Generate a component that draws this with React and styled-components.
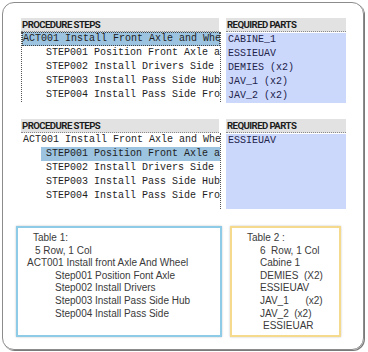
import React from "react";
import styled, { createGlobalStyle } from "styled-components";

const GlobalStyle = createGlobalStyle`
  body {
    margin: 0;
    background: #fff;
    font-family: "Liberation Sans", Arial, sans-serif;
  }
`;

const Frame = styled.div`
  box-sizing: border-box;
  margin: 2px;
  width: 362px;
  height: 348px;
  border: 1px solid #8c8c8c;
  border-radius: 12px;
  box-shadow: 1px 1px 0 #7a7a7a;
  padding: 15px 0 0 13px;
`;

const Group = styled.div`
  display: flex;
  gap: 5px;
  margin-left: 5px;
  margin-bottom: ${(p) => p.$after}px;
`;

const StepsPanel = styled.div`
  width: 200px;
`;

const PartsPanel = styled.div`
  width: 120px;
  display: flex;
  flex-direction: column;
`;

const Header = styled.div`
  box-sizing: border-box;
  height: 14px;
  line-height: 13px;
  padding-left: 1px;
  background: #e2e2e2;
  border-bottom: 1px dotted #8a8a8a;
  font-family: Roboto, "Liberation Sans", sans-serif;
  font-weight: 700;
  font-size: 9.6px;
  letter-spacing: -0.55px;
  color: #1c1c1c;
  margin-right: ${(p) => (p.$trim ? 2 : 0)}px;
`;

const StepsBody = styled.div`
  box-sizing: border-box;
  min-height: ${(p) => p.$height}px;
  border-right: 1px dotted #555;
  border-left: 1px dotted ${(p) => (p.$focused ? "#555" : "transparent")};
`;

const Row = styled.div`
  display: flex;
  height: 14px;
  padding-left: ${(p) => p.$indent}px;
  overflow: hidden;
`;

const Label = styled.span`
  box-sizing: border-box;
  flex: 1;
  height: 14px;
  line-height: 14px;
  padding-left: ${(p) => p.$pad}px;
  white-space: pre;
  overflow: hidden;
  font-family: "Liberation Mono", "Courier New", monospace;
  font-size: 10px;
  color: #1e1e1e;
  background: ${(p) => (p.$selected ? "#9cc3df" : "transparent")};
  outline: ${(p) => (p.$focused ? "1px dotted #444" : "none")};
  outline-offset: -1px;
`;

const PartsBody = styled.div`
  flex: 1;
  margin-top: 1px;
  background: #ccd7fc;
`;

const Part = styled.div`
  height: 14px;
  line-height: 14px;
  padding-left: 2px;
  white-space: pre;
  font-family: "Liberation Mono", "Courier New", monospace;
  font-size: 10px;
  color: #22244a;
`;

const Notes = styled.div`
  display: flex;
  gap: 8px;
`;

const NoteBox = styled.div`
  box-sizing: border-box;
  width: ${(p) => p.$width}px;
  height: 111px;
  border: 2px solid ${(p) => p.$color};
  box-shadow: 0 0 2px rgba(0, 0, 0, 0.22);
  padding-top: 4px;
`;

const Line = styled.div`
  padding-left: ${(p) => p.$indent}px;
  font-size: 10px;
  line-height: 12.6px;
  color: #3a3a3a;
  white-space: pre;
`;

const steps = [
  { text: "ACT001 Install Front Axle and Wheel", level: 0 },
  { text: "STEP001 Position Front Axle and Wheel", level: 1 },
  { text: "STEP002 Install Drivers Side Hub", level: 1 },
  { text: "STEP003 Install Pass Side Hub", level: 1 },
  { text: "STEP004 Install Pass Side Front", level: 1 },
];

function StepList({ selected, focused, height }) {
  return (
    <StepsBody $height={height} $focused={focused}>
      {steps.map((s, i) => (
        <Row key={i} $indent={s.level ? 19 : 0}>
          <Label
            $pad={s.level ? 5 : 1}
            $selected={i === selected}
            $focused={focused && i === selected}
          >
            {s.text}
          </Label>
        </Row>
      ))}
    </StepsBody>
  );
}

function Procedure({ selected, focused, parts, height, after }) {
  return (
    <Group $after={after}>
      <StepsPanel>
        <Header $trim>PROCEDURE STEPS</Header>
        <StepList selected={selected} focused={focused} height={height} />
      </StepsPanel>
      <PartsPanel>
        <Header>REQUIRED PARTS</Header>
        <PartsBody>
          {parts.map((p) => (
            <Part key={p}>{p}</Part>
          ))}
        </PartsBody>
      </PartsPanel>
    </Group>
  );
}

export default function App() {
  return (
    <>
      <GlobalStyle />
      <Frame>
        <Procedure
          selected={0}
          focused
          height={70}
          after={16}
          parts={["CABINE_1", "ESSIEUAV", "DEMIES (x2)", "JAV_1 (x2)", "JAV_2 (x2)"]}
        />
        <Procedure selected={1} height={76} after={17} parts={["ESSIEUAV"]} />
        <Notes>
          <NoteBox $width={206} $color="#8ecbe7">
            <Line $indent={15}>Table 1:</Line>
            <Line $indent={17}>5 Row, 1 Col</Line>
            <Line $indent={9}>ACT001 Install front Axle And Wheel</Line>
            <Line $indent={37}>Step001 Position Font Axle</Line>
            <Line $indent={37}>Step002 Install Drivers</Line>
            <Line $indent={37}>Step003 Install Pass Side Hub</Line>
            <Line $indent={37}>Step004 Install Pass Side</Line>
          </NoteBox>
          <NoteBox $width={111} $color="#f5d98c">
            <Line $indent={15}>Table 2 :</Line>
            <Line $indent={28}>6  Row, 1 Col</Line>
            <Line $indent={28}>Cabine 1</Line>
            <Line $indent={28}>DEMIES  (X2)</Line>
            <Line $indent={28}>ESSIEUAV</Line>
            <Line $indent={28}>JAV_1      (x2)</Line>
            <Line $indent={28}>JAV_2  (x2)</Line>
            <Line $indent={31}>ESSIEUAR</Line>
          </NoteBox>
        </Notes>
      </Frame>
    </>
  );
}
